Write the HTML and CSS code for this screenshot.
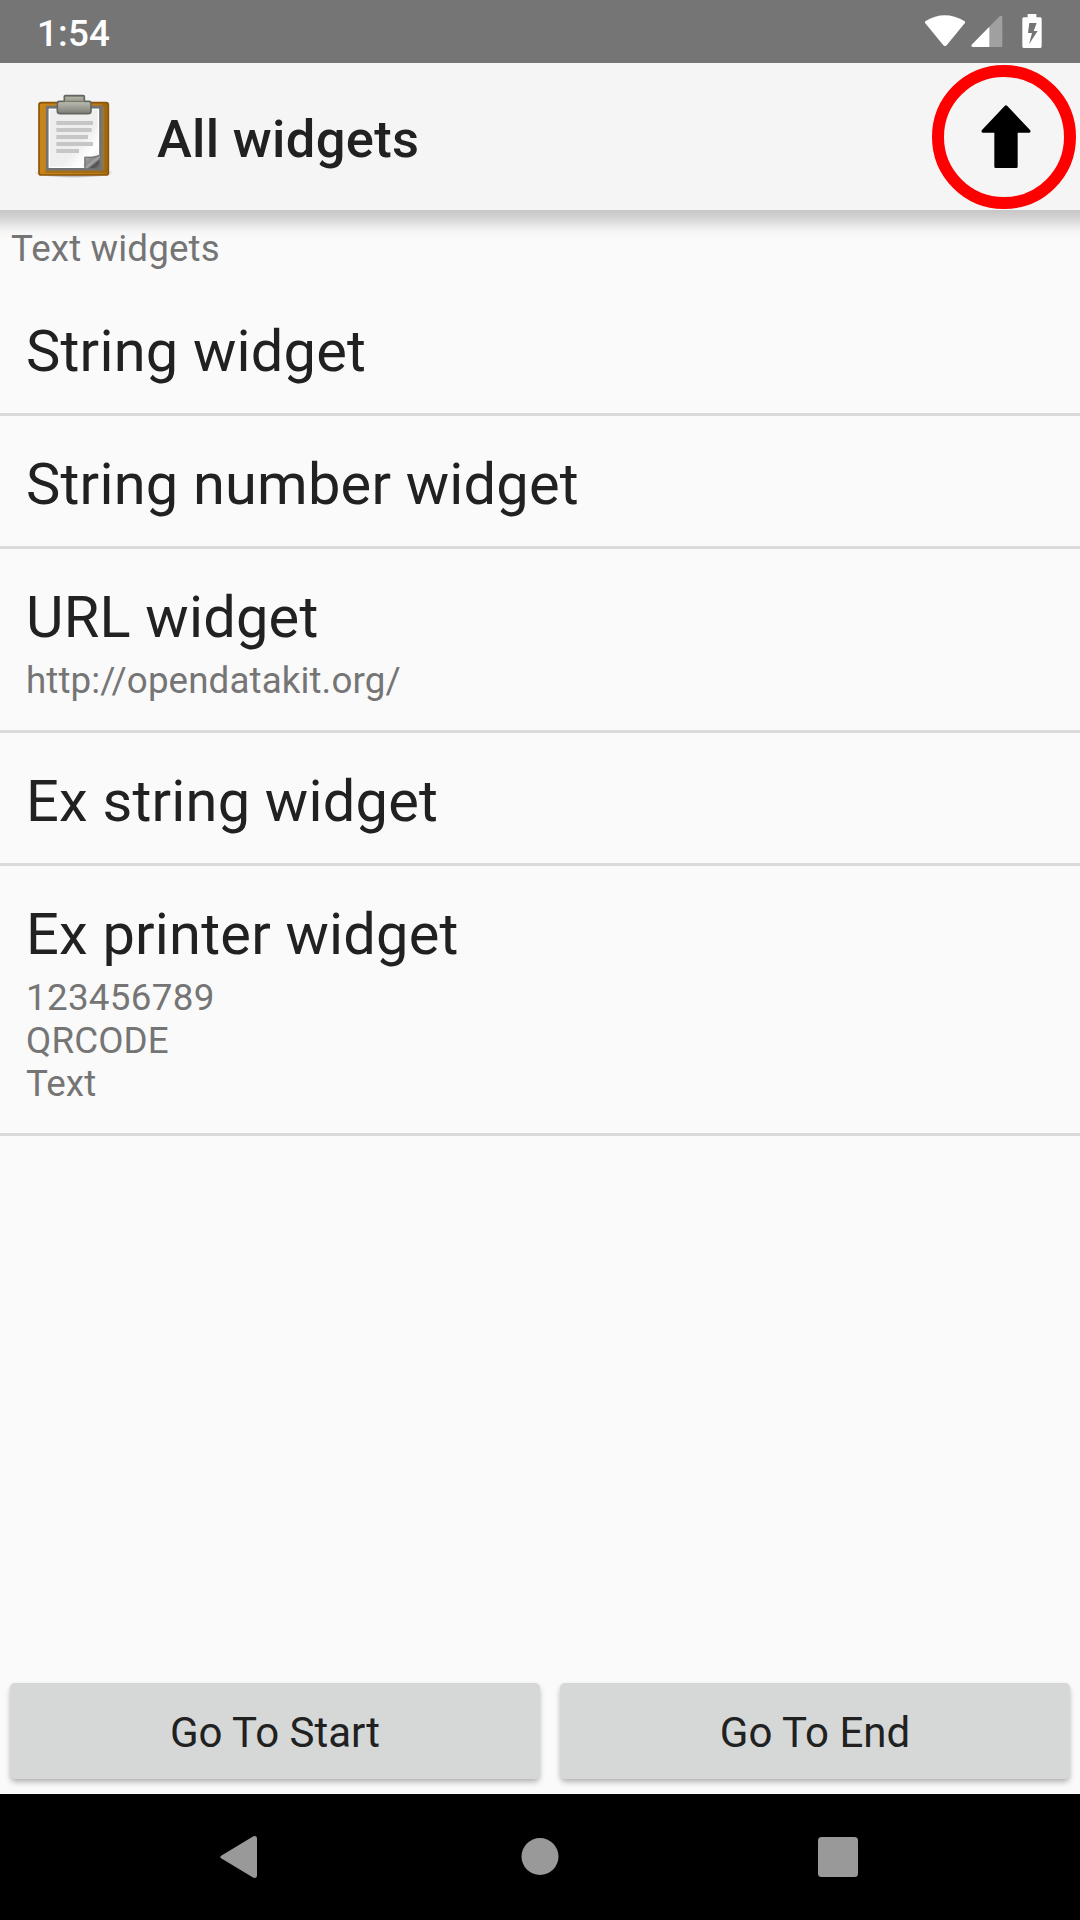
FILE: index.html
```html
<!DOCTYPE html>
<html lang="en">
<head>
<meta charset="utf-8">
<title>All widgets</title>
<link rel="stylesheet" href="styles.css">
</head>
<body>
<div class="screen">
  <div class="status-bar">
    <span class="clock">1:54</span>
    <svg class="status-icons" width="120" height="36" viewBox="0 0 360 108">
      <path fill="#fff" d="M4 28Q1 24 5 21Q62 -14 121 21Q125 24 122 28L68 94Q63 99 58 94Z"/>
      <path fill="#a0a0a0" d="M195 39L227 7Q234 2 235 9V95Q235 99 231 99H195Z"/>
      <path fill="#fff" d="M196 38V99H146Q140 97 143 92Z"/>
      <path fill="#fff" fill-rule="evenodd" d="M311 0H337V10H349Q353 10 353 15V97Q353 102 349 102H299Q295 102 295 97V15Q295 10 299 10H311ZM316 27L312 57H324L315 91L341 51H329L338 27Z"/>
    </svg>
  </div>
  <header class="app-bar">
    <svg class="app-icon" width="110" height="110" viewBox="0 0 330 330">
      <defs>
        <linearGradient id="board" x1="0" y1="0" x2="1" y2="0"><stop offset="0" stop-color="#c98519"/><stop offset=".85" stop-color="#b87a18"/><stop offset="1" stop-color="#a86c12"/></linearGradient>
        <linearGradient id="paper" x1="0" y1="0" x2="1" y2="1"><stop offset="0" stop-color="#ededed"/><stop offset=".6" stop-color="#efefef"/><stop offset=".78" stop-color="#ffffff"/><stop offset="1" stop-color="#d8d8d8"/></linearGradient>
        <linearGradient id="clip" x1="0" y1="0" x2="0" y2="1"><stop offset="0" stop-color="#9b9c90"/><stop offset=".45" stop-color="#b0b1a5"/><stop offset="1" stop-color="#7c7e76"/></linearGradient>
        <linearGradient id="fold" x1="0" y1="0" x2="1" y2="1"><stop offset="0" stop-color="#b5b5b5"/><stop offset=".4" stop-color="#8b8b8b"/><stop offset=".55" stop-color="#a8a8a8"/><stop offset=".7" stop-color="#505050"/><stop offset="1" stop-color="#777"/></linearGradient>
        <radialGradient id="ground"><stop offset=".75" stop-color="#000" stop-opacity=".22"/><stop offset="1" stop-color="#000" stop-opacity="0"/></radialGradient>
      </defs>
      <ellipse cx="162" cy="278" rx="119" ry="16" fill="url(#ground)"/>
      <rect x="57" y="68" width="208" height="217" rx="7" fill="url(#board)" stroke="#8a5509" stroke-width="5"/>
      <path d="M247 76H257V275H76" fill="none" stroke="#946314" stroke-width="7" opacity=".65"/>
      <path d="M82 82H242V267H82Z" fill="url(#paper)" stroke="#707274" stroke-width="9"/>
      <path d="M246 80V270" stroke="#777" stroke-width="6"/>
      <path d="M88 88H235V262H88Z" fill="none" stroke="#fff" stroke-width="4"/>
      <path d="M109 129H219M109 150H215M109 171H204M109 192H219M109 213H177" stroke="#c6c6c6" stroke-width="12"/>
      <path d="M193 230H219L239 227V265H193Z" fill="url(#fold)"/>
      <path d="M195 263V232H216Q232 230 238 226" fill="none" stroke="#777" stroke-width="4"/>
      <path d="M133 64V49Q133 47 136 47H190Q193 47 193 50V64H207Q213 64 213 70V92Q213 101 204 101H121Q112 101 112 92V70Q112 64 118 64Z" fill="url(#clip)" stroke="#62665f" stroke-width="5"/>
      <path d="M137 53H189M118 69H207" stroke="#b4b6aa" stroke-width="3"/>
      <path d="M137 64H189" stroke="#777a70" stroke-width="4"/>
    </svg>
    <h1 class="title">All widgets</h1>
    <svg class="up-arrow" width="50" height="64" viewBox="0 0 150 192">
      <path d="M71 3Q75 -1 79 3L147 75Q151 82 145 83H110V185Q110 189 106 189H44Q40 189 40 185V83H5Q-1 82 3 75Z"/>
    </svg>
    <span class="highlight-ring"></span>
  </header>
  <main class="content">
    <div class="section-label">Text widgets</div>
    <ul class="list">
      <li class="row"><div class="question">String widget</div></li>
      <li class="row"><div class="question">String number widget</div></li>
      <li class="row"><div class="question">URL widget</div><div class="answer">http://opendatakit.org/</div></li>
      <li class="row"><div class="question">Ex string widget</div></li>
      <li class="row"><div class="question">Ex printer widget</div><div class="answer"><span class="digits">123456789</span><br>QRCODE<br>Text</div></li>
    </ul>
  </main>
  <div class="actions">
    <button class="button button-start">Go To Start</button>
    <button class="button button-end">Go To End</button>
  </div>
  <nav class="nav-bar">
    <svg width="38" height="44" viewBox="0 0 38 44"><path fill="#999" d="M1.5 20.5L33 1.5Q37 0 37 4V40Q37 44 33 42.500L1.500 23.500Q-1 22 1.500 20.500Z"/></svg>
    <svg class="home" width="38" height="38" viewBox="0 0 38 38"><circle cx="19" cy="18.500" r="18.500" fill="#999"/></svg>
    <svg width="40" height="40" viewBox="0 0 40 40"><rect width="40" height="40" rx="3.500" fill="#999"/></svg>
  </nav>
</div>
</body>
</html>
```
FILE: styles.css
```css
* { box-sizing: border-box; }
body {
  margin: 0;
  font-family: Roboto, "Liberation Sans", sans-serif;
  color: #212121;
}
svg { display: block; flex: none; }
.screen {
  display: flex;
  flex-direction: column;
  width: 1080px;
  height: 1920px;
  overflow: hidden;
  background: #fafafa;
}
.status-bar {
  display: flex;
  justify-content: space-between;
  flex: none;
  height: 63px;
  padding: 12px 36px 0 37px;
  background: #757575;
}
.clock {
  color: #fff;
  font-size: 36.75px;
  font-weight: 500;
  line-height: 43px;
  letter-spacing: .2px;
}
.status-icons { margin-top: 2px; }
.app-bar {
  position: relative;
  display: flex;
  flex: none;
  height: 147px;
  padding: 17px 49px 0 20px;
  background: #f5f5f5;
}
.title {
  flex: 1;
  margin: 28px 0 0 27px;
  font-size: 52.5px;
  font-weight: 500;
  line-height: 62px;
  letter-spacing: .3px;
}
.up-arrow { margin-top: 25px; }
.highlight-ring {
  position: absolute;
  top: 2px;
  right: 4px;
  width: 144px;
  height: 144px;
  border: 12px solid #f00;
  border-radius: 50%;
}
.content {
  flex: 1;
  padding-top: 17px;
  background: linear-gradient(#c6c6c6, #d4d4d4 8px, #e8e8e8 16px, #f6f6f6 22px, #fafafa 28px);
}
.section-label {
  padding-left: 11px;
  color: #757575;
  font-size: 36.75px;
  line-height: 43px;
  letter-spacing: .11px;
}
.list {
  margin: 13px 0 0;
  padding: 0;
  list-style: none;
}
.row {
  padding: 34px 26px 28px;
  border-bottom: 3px solid #dadada;
}
.question {
  font-size: 57.75px;
  line-height: 68px;
  letter-spacing: .21px;
}
.answer {
  margin-top: 8px;
  color: #757575;
  font-size: 36.75px;
  line-height: 43px;
  letter-spacing: .1px;
}
.digits { letter-spacing: .3px; }
.actions {
  display: flex;
  flex: none;
  gap: 20px;
  height: 111px;
  padding: 0 10px 15px;
}
.button {
  padding: 4px 0 0;
  border: 0;
  border-radius: 5px;
  background: #d6d8d7;
  box-shadow: 0 4px 6px -1px rgba(0, 0, 0, .27), 0 1px 4px rgba(0, 0, 0, .07);
  color: #212121;
  font-family: inherit;
  font-size: 42px;
  line-height: 50px;
}
.button-start { width: 530px; }
.button-end { width: 510px; }
.nav-bar {
  display: flex;
  flex: none;
  align-items: center;
  justify-content: space-between;
  height: 126px;
  padding: 0 222px 0 220px;
  background: #000;
}
.home { margin-left: 3px; }
```
